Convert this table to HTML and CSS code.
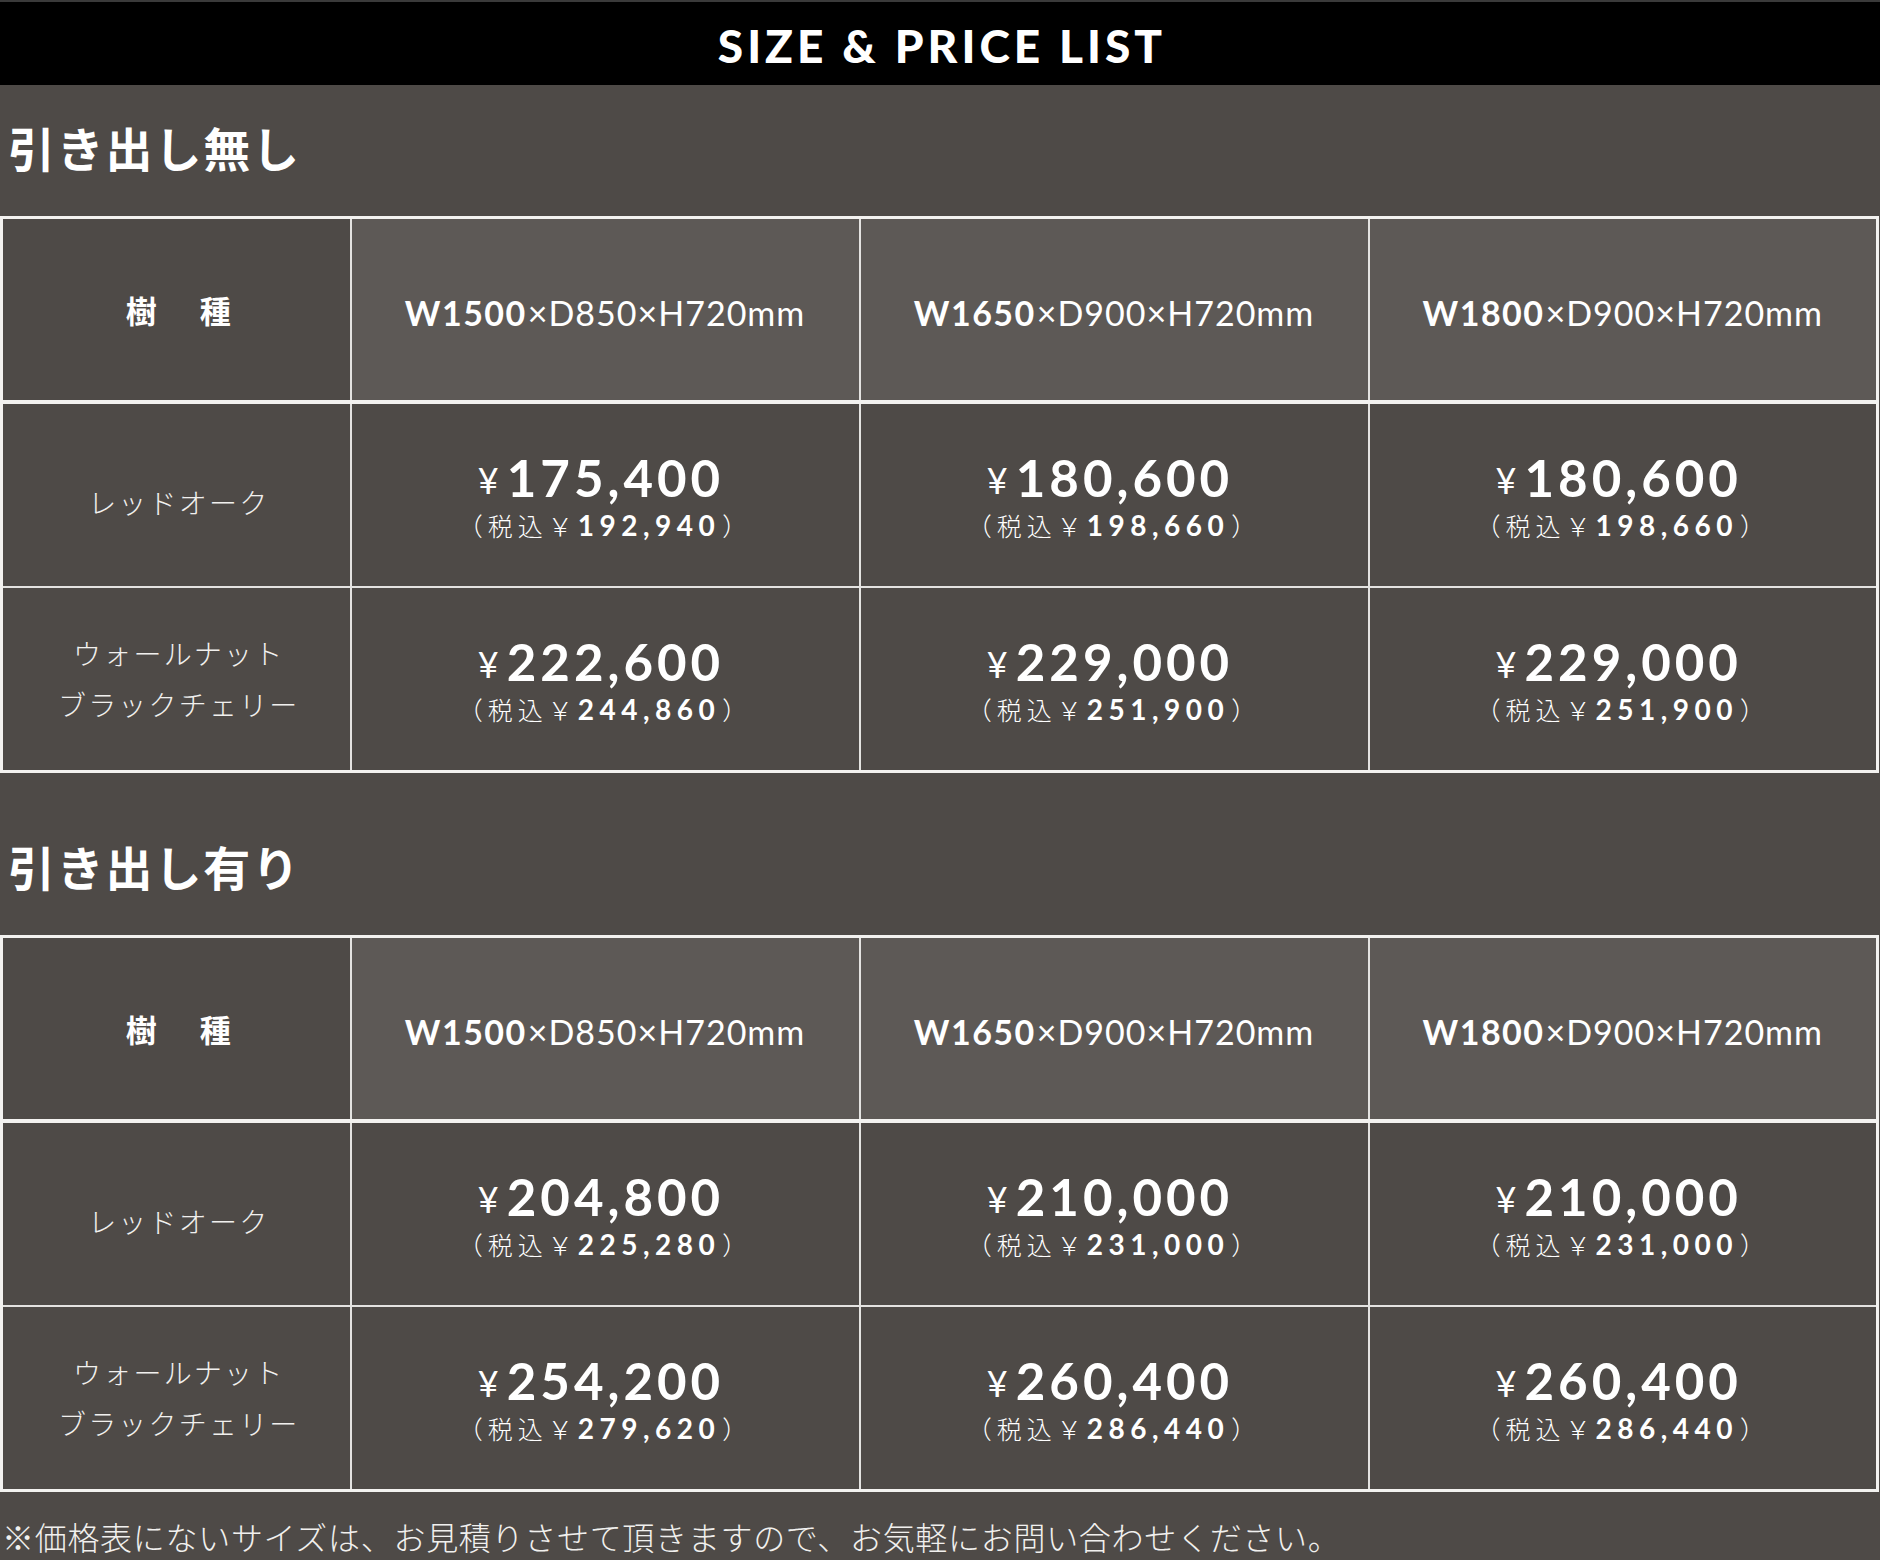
FILE: index.html
```html
<!DOCTYPE html>
<html lang="ja">
<head>
<meta charset="utf-8">
<title>SIZE &amp; PRICE LIST</title>
<link rel="stylesheet" href="styles.css">
</head>
<body>
<header class="page-header"><h1 class="page-title">SIZE &amp; PRICE LIST</h1></header>

<main class="content">
  <section class="section">
    <h2 class="section-title">引き出し無し</h2>
    <table class="price-table">
      <colgroup><col class="c-wood"><col class="c-size"><col class="c-size"><col class="c-size"></colgroup>
      <thead>
        <tr>
          <th class="wood-head">樹　種</th>
          <th class="size-head"><b>W1500</b>×D850×H720mm</th>
          <th class="size-head"><b>W1650</b>×D900×H720mm</th>
          <th class="size-head"><b>W1800</b>×D900×H720mm</th>
        </tr>
      </thead>
      <tbody>
        <tr>
          <td class="wood wood-single">レッドオーク</td>
          <td class="pcell"><div class="price"><span class="yen">¥</span>175,400</div><div class="tax"><span class="tax-label">（税込￥</span>192,940<span class="tax-label tax-close">）</span></div></td>
          <td class="pcell"><div class="price"><span class="yen">¥</span>180,600</div><div class="tax"><span class="tax-label">（税込￥</span>198,660<span class="tax-label tax-close">）</span></div></td>
          <td class="pcell"><div class="price"><span class="yen">¥</span>180,600</div><div class="tax"><span class="tax-label">（税込￥</span>198,660<span class="tax-label tax-close">）</span></div></td>
        </tr>
        <tr>
          <td class="wood">ウォールナット<br>ブラックチェリー</td>
          <td class="pcell"><div class="price"><span class="yen">¥</span>222,600</div><div class="tax"><span class="tax-label">（税込￥</span>244,860<span class="tax-label tax-close">）</span></div></td>
          <td class="pcell"><div class="price"><span class="yen">¥</span>229,000</div><div class="tax"><span class="tax-label">（税込￥</span>251,900<span class="tax-label tax-close">）</span></div></td>
          <td class="pcell"><div class="price"><span class="yen">¥</span>229,000</div><div class="tax"><span class="tax-label">（税込￥</span>251,900<span class="tax-label tax-close">）</span></div></td>
        </tr>
      </tbody>
    </table>
  </section>

  <section class="section">
    <h2 class="section-title">引き出し有り</h2>
    <table class="price-table">
      <colgroup><col class="c-wood"><col class="c-size"><col class="c-size"><col class="c-size"></colgroup>
      <thead>
        <tr>
          <th class="wood-head">樹　種</th>
          <th class="size-head"><b>W1500</b>×D850×H720mm</th>
          <th class="size-head"><b>W1650</b>×D900×H720mm</th>
          <th class="size-head"><b>W1800</b>×D900×H720mm</th>
        </tr>
      </thead>
      <tbody>
        <tr>
          <td class="wood wood-single">レッドオーク</td>
          <td class="pcell"><div class="price"><span class="yen">¥</span>204,800</div><div class="tax"><span class="tax-label">（税込￥</span>225,280<span class="tax-label tax-close">）</span></div></td>
          <td class="pcell"><div class="price"><span class="yen">¥</span>210,000</div><div class="tax"><span class="tax-label">（税込￥</span>231,000<span class="tax-label tax-close">）</span></div></td>
          <td class="pcell"><div class="price"><span class="yen">¥</span>210,000</div><div class="tax"><span class="tax-label">（税込￥</span>231,000<span class="tax-label tax-close">）</span></div></td>
        </tr>
        <tr>
          <td class="wood">ウォールナット<br>ブラックチェリー</td>
          <td class="pcell"><div class="price"><span class="yen">¥</span>254,200</div><div class="tax"><span class="tax-label">（税込￥</span>279,620<span class="tax-label tax-close">）</span></div></td>
          <td class="pcell"><div class="price"><span class="yen">¥</span>260,400</div><div class="tax"><span class="tax-label">（税込￥</span>286,440<span class="tax-label tax-close">）</span></div></td>
          <td class="pcell"><div class="price"><span class="yen">¥</span>260,400</div><div class="tax"><span class="tax-label">（税込￥</span>286,440<span class="tax-label tax-close">）</span></div></td>
        </tr>
      </tbody>
    </table>
  </section>

  <p class="note">※価格表にないサイズは、お見積りさせて頂きますので、お気軽にお問い合わせください。</p>
</main>
</body>
</html>
```

FILE: styles.css
```css
html, body {
  margin: 0;
  padding: 0;
  background: #4e4a47;
  color: #ffffff;
  font-family: "Noto Sans CJK JP", "Noto Sans", sans-serif;
}

.page-header {
  background: #000000;
  border-top: 2px solid #3a3a3a;
  height: 83px;
  display: flex;
  align-items: center;
  justify-content: center;
}

.page-title {
  margin: 0;
  font-family: "Lato", "Liberation Sans", sans-serif;
  font-weight: 900;
  font-size: 46px;
  letter-spacing: 4px;
  line-height: 1;
  color: #ffffff;
  padding-top: 4px;
  padding-left: 4px;
}

.content {
  display: flex;
  flex-direction: column;
}

.section + .section {
  margin-top: 31px;
}

.section-title {
  margin: 0;
  padding: 38px 0 46px 8px;
  font-size: 47px;
  line-height: 47px;
  font-weight: 700;
  letter-spacing: 1.8px;
}

.price-table {
  width: 1877px;
  table-layout: fixed;
  border-collapse: collapse;
  border: 3px solid #f3f2f0;
}

.c-wood { width: 349px; }
.c-size { width: 509px; }

.price-table th,
.price-table td {
  border: 2px solid #e4e3e1;
  padding: 0;
  height: 182px;
  text-align: center;
  vertical-align: middle;
}

.price-table thead th {
  border-bottom: 4px solid #f3f2f0;
  background: #5d5956;
  height: 181px;
}

.price-table thead th.wood-head {
  background: #4e4a47;
  font-size: 31px;
  font-weight: 700;
  letter-spacing: 6px;
  padding-left: 10px;
}

.size-head {
  font-family: "Lato", "Liberation Sans", sans-serif;
  font-weight: 400;
  font-size: 34px;
  letter-spacing: 1px;
}

.price-table thead th.size-head {
  padding-top: 6px;
  height: 175px;
}

.size-head b {
  font-weight: 700;
  letter-spacing: 1.5px;
  margin-right: 1px;
}

.price-table td.wood {
  font-size: 28px;
  font-weight: 300;
  letter-spacing: 2.2px;
  line-height: 51px;
  color: #f1f0ee;
  padding-left: 5px;
}

.price-table td.wood-single {
  padding-top: 14px;
  height: 168px;
}

.price-table td.pcell {
  padding-top: 7px;
  height: 175px;
}

.price {
  font-family: "Lato", "Liberation Sans", sans-serif;
  font-weight: 700;
  font-size: 51px;
  line-height: 50px;
  letter-spacing: 4px;
  padding-right: 8px;
}

.yen {
  font-weight: 400;
  font-size: 36px;
  vertical-align: 3px;
  margin-right: 8px;
  letter-spacing: 0;
}

.tax {
  font-family: "Lato", "Liberation Sans", sans-serif;
  font-weight: 700;
  font-size: 28px;
  letter-spacing: 5.5px;
  line-height: 40px;
}

.tax-label {
  font-family: "Noto Sans CJK JP", sans-serif;
  font-weight: 300;
  font-size: 25px;
  letter-spacing: 5px;
}

.tax-close {
  margin-left: 2px;
}

.note {
  margin: 24px 0 0 0;
  padding-left: 2px;
  font-size: 32px;
  line-height: 40px;
  font-weight: 300;
  letter-spacing: 0.7px;
  color: #f1f0ee;
}
```
